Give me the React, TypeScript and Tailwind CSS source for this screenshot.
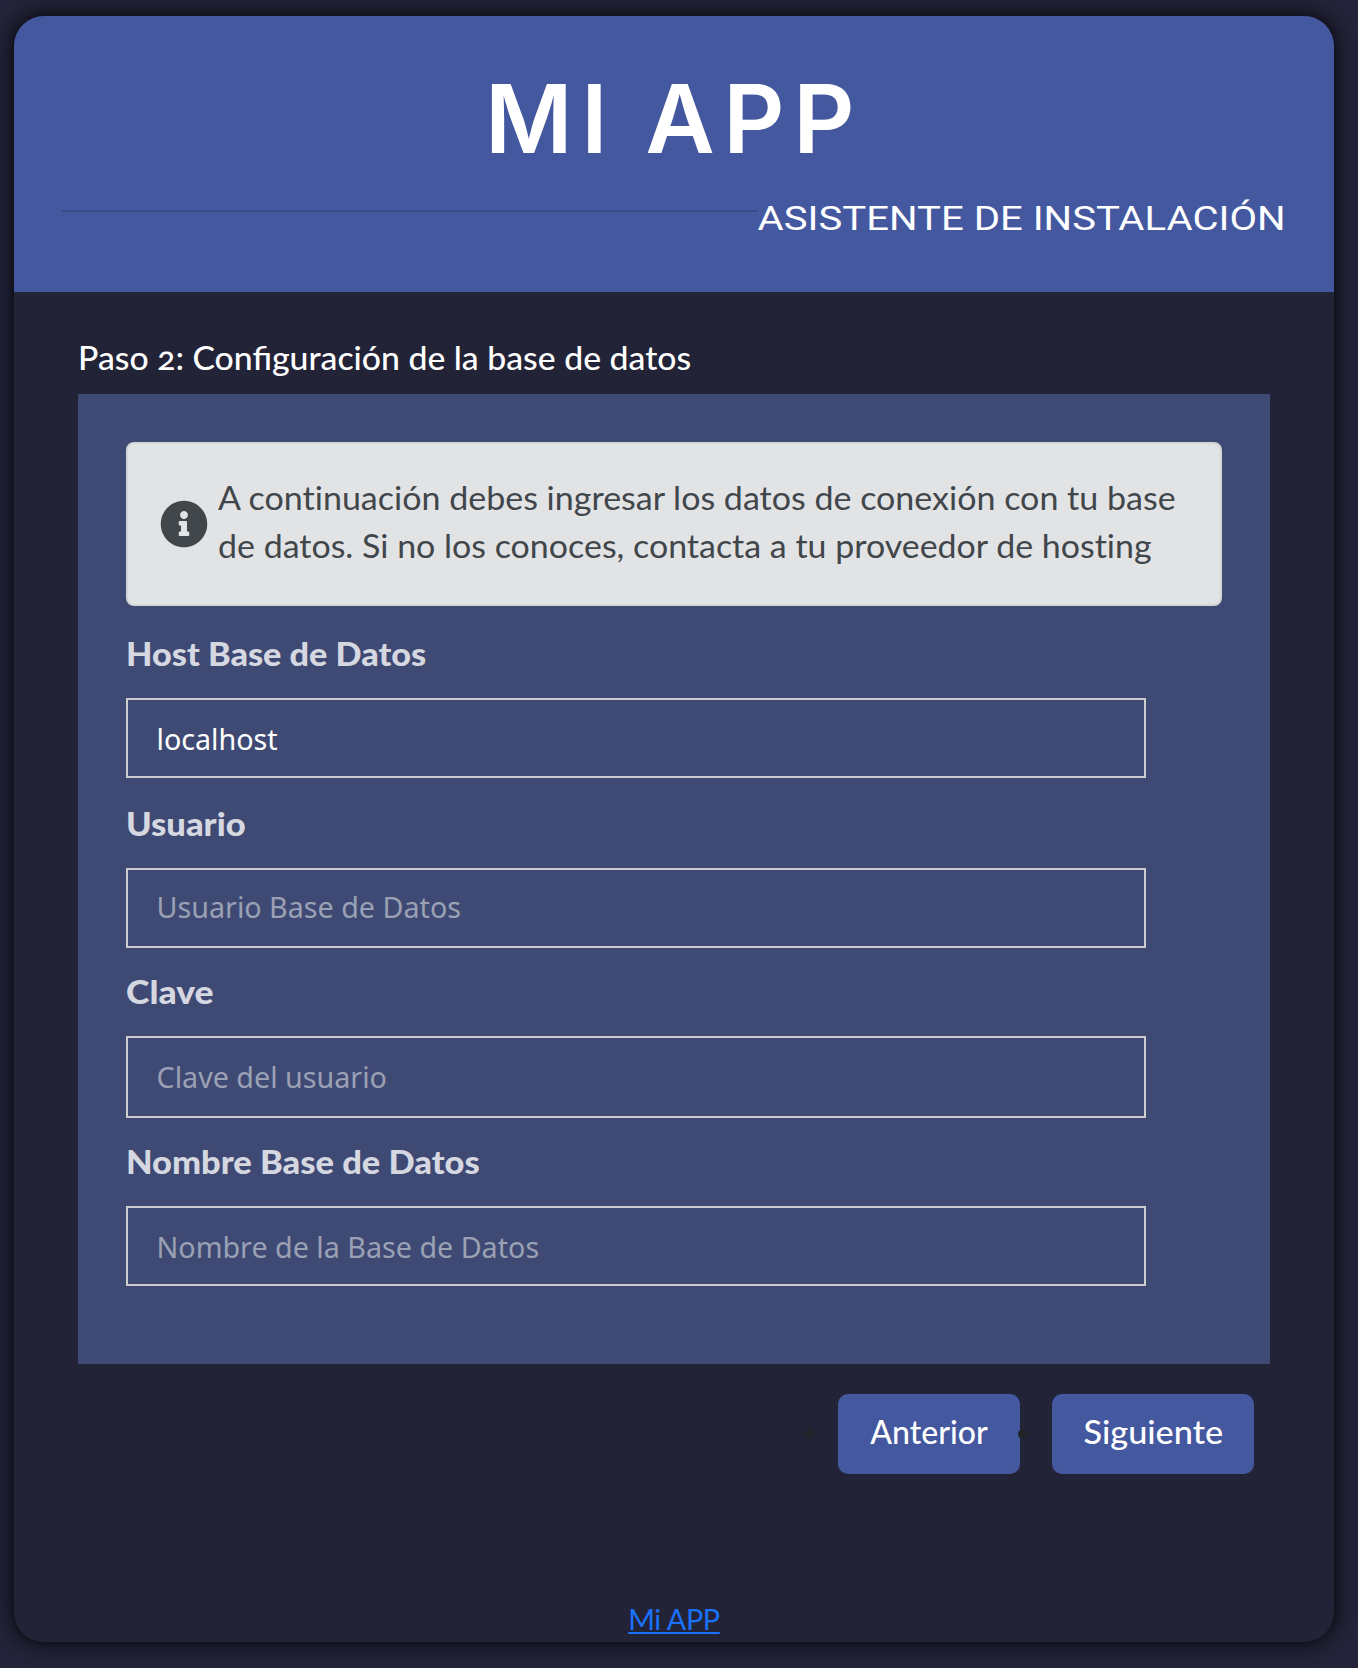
import React from "react";
import { FaInfoCircle } from "react-icons/fa";

type FieldProps = {
  label: string;
  labelClass: string;
  inputClass: string;
  value?: string;
  placeholder?: string;
  type?: string;
};

const fields: FieldProps[] = [
  {
    label: "Host Base de Datos",
    labelClass: "mt-6 scale-x-[1.07]",
    inputClass: "h-20",
    value: "localhost",
  },
  {
    label: "Usuario",
    labelClass: "mt-[22px] scale-x-[1.08]",
    inputClass: "h-20 pb-1",
    placeholder: "Usuario Base de Datos",
  },
  {
    label: "Clave",
    labelClass: "mt-5 scale-x-[1.11]",
    inputClass: "h-[82px] pb-0.5",
    placeholder: "Clave del usuario",
  },
  {
    label: "Nombre Base de Datos",
    labelClass: "mt-5 scale-x-[1.077]",
    inputClass: "h-20",
    placeholder: "Nombre de la Base de Datos",
  },
];

function Field({ label, labelClass, inputClass, value, placeholder, type = "text" }: FieldProps) {
  return (
    <label className="block">
      <span className={`block h-12 w-fit origin-left text-[32px] leading-[48px] font-black text-[#d6d8e1] ${labelClass}`}>
        {label}
      </span>
      <input
        type={type}
        defaultValue={value}
        placeholder={placeholder}
        className={`mt-5 block w-[1020px] border-2 border-[#cccccc] bg-transparent px-[28.5px] font-['Noto_Sans',sans-serif] text-[28.7px] text-white outline-none placeholder:text-[#9ba1b5] ${inputClass}`}
      />
    </label>
  );
}

function NavButton({
  children,
  className,
  textClass,
}: {
  children: string;
  className: string;
  textClass: string;
}) {
  return (
    <button
      type="button"
      className={`h-20 rounded-[10px] bg-[#44589f] pb-1 text-center text-[32px] leading-[48px] font-medium text-white ${className}`}
    >
      <span className={`inline-block ${textClass}`}>{children}</span>
    </button>
  );
}

export default function App() {
  return (
    <div className="h-[1668px] w-[1358px] overflow-hidden bg-[#232339] pt-4 pl-3.5 font-['Lato',sans-serif]">
      <main className="flex h-[1626px] w-[1320px] flex-col overflow-hidden rounded-[30px] bg-[#232338] shadow-[0_0_20px_#000]">
        <header className="h-[276px] shrink-0 bg-[#44589f] px-12 pt-[45px] text-white">
          <h1 className="h-[113px] text-center font-['Inter',sans-serif] text-[95px] leading-[115px] font-semibold tracking-[8.6px] [word-spacing:-3px]">
            MI APP
          </h1>
          <div className="mt-[25px] flex items-start justify-between">
            <div className="mt-[11px] h-0.5 w-[696px] bg-[#3c4c87]" />
            <h2 className="-mt-0.5 w-[526px] text-right text-[33px] leading-10 whitespace-nowrap">
              <span className="inline-block origin-right scale-x-[1.215] font-['Roboto',sans-serif] font-normal">
                ASISTENTE DE INSTALACIÓN
              </span>
            </h2>
          </div>
        </header>

        <section className="px-16 pt-[42px]">
          <p className="w-fit origin-left scale-x-[1.055] text-[32px] leading-[48px] font-medium text-white oldstyle-nums">
            Paso 2: Configuración de la base de datos
          </p>
          <form className="mt-3 h-[970px] bg-[#3f4a74] px-12 pt-12">
            <div className="flex h-[164px] items-center gap-[10px] rounded-lg border-2 border-[#d3d6d8] bg-[#e2e3e5] pl-8 text-[#41464b]">
              <FaInfoCircle className="size-12 shrink-0" />
              <div className="pb-[4px] text-[32px] leading-[48px] whitespace-nowrap [font-variant-ligatures:none]">
                <div className="w-fit origin-left scale-x-[1.063]">
                  A continuación debes ingresar los datos de conexión con tu base
                </div>
                <div className="w-fit origin-left scale-x-[1.061]">
                  de datos. Si no los conoces, contacta a tu proveedor de hosting
                </div>
              </div>
            </div>
            {fields.map((field) => (
              <Field key={field.label} {...field} />
            ))}
          </form>
        </section>

        <nav className="mt-[30px] flex items-center justify-end pr-20">
          <span className="mr-6 size-2.5 rounded-full bg-[#212529]" />
          <NavButton className="w-[182px]" textClass="scale-x-[1.0]">
            Anterior
          </NavButton>
          <span className="relative z-10 mr-6 -ml-0.5 size-2.5 rounded-full bg-[#212529]" />
          <NavButton className="w-[202px]" textClass="scale-x-[1.07]">
            Siguiente
          </NavButton>
        </nav>

        <footer className="mt-auto h-[45px] text-center text-[28.8px] leading-[44px]">
          <a
            href="#"
            className="tracking-[-0.4px] text-[#1a72fb] underline decoration-2 underline-offset-2 [text-decoration-skip-ink:none]"
          >
            Mi APP
          </a>
        </footer>
      </main>
    </div>
  );
}
